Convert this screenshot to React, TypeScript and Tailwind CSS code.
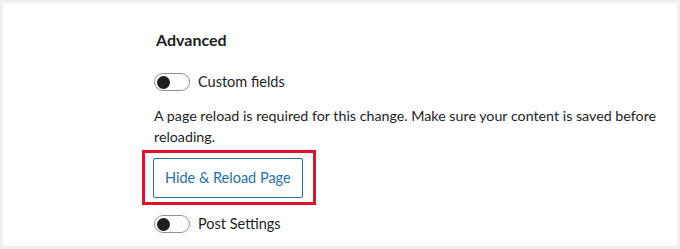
function Toggle() {
  return (
    <span className="relative inline-flex h-[18px] w-[36px] shrink-0 items-center rounded-full border border-[#949494] bg-white">
      <span className="ml-[2px] h-[13px] w-[13px] rounded-full bg-[#1e1e1e]"></span>
    </span>
  )
}

export default function App() {
  return (
    <main
      className="h-[249px] w-[680px] border-[3px] border-[#efefef] bg-white text-[#1e1e1e]"
      style={{ fontFamily: 'Lato, "Noto Sans", sans-serif' }}
    >
      <div className="flex flex-col items-start pl-[151px] pt-[25px]">
        {/* Section title */}
        <h2 className="ml-[2px] text-[16px] leading-6 font-bold">Advanced</h2>

        {/* Custom fields toggle */}
        <div className="mt-[21px] flex items-center gap-[8px]">
          <Toggle />
          <span className="text-[14.5px] leading-[18px] text-[#1e1e1e]">Custom fields</span>
        </div>

        <p className="mt-[14px] w-[512px] text-[14.25px] leading-[21px] text-[#1e1e1e]">
          A page reload is required for this change. Make sure your content is saved before reloading.
        </p>

        {/* Highlighted button */}
        <div className="mt-[3px] -ml-[12px] border-[3px] border-[#e1102b] pt-[5px] pr-[10px] pb-[4px] pl-[8px]">
          <button className="h-[40px] rounded-[2px] border border-[#2271b1] bg-white px-[11px] text-[14.5px] text-[#2271b1]">
            Hide &amp; Reload Page
          </button>
        </div>

        {/* Post settings toggle */}
        <div className="mt-[10px] flex items-center gap-[8px]">
          <Toggle />
          <span className="text-[14.5px] leading-[18px] text-[#1e1e1e]">Post Settings</span>
        </div>
      </div>
    </main>
  )
}
